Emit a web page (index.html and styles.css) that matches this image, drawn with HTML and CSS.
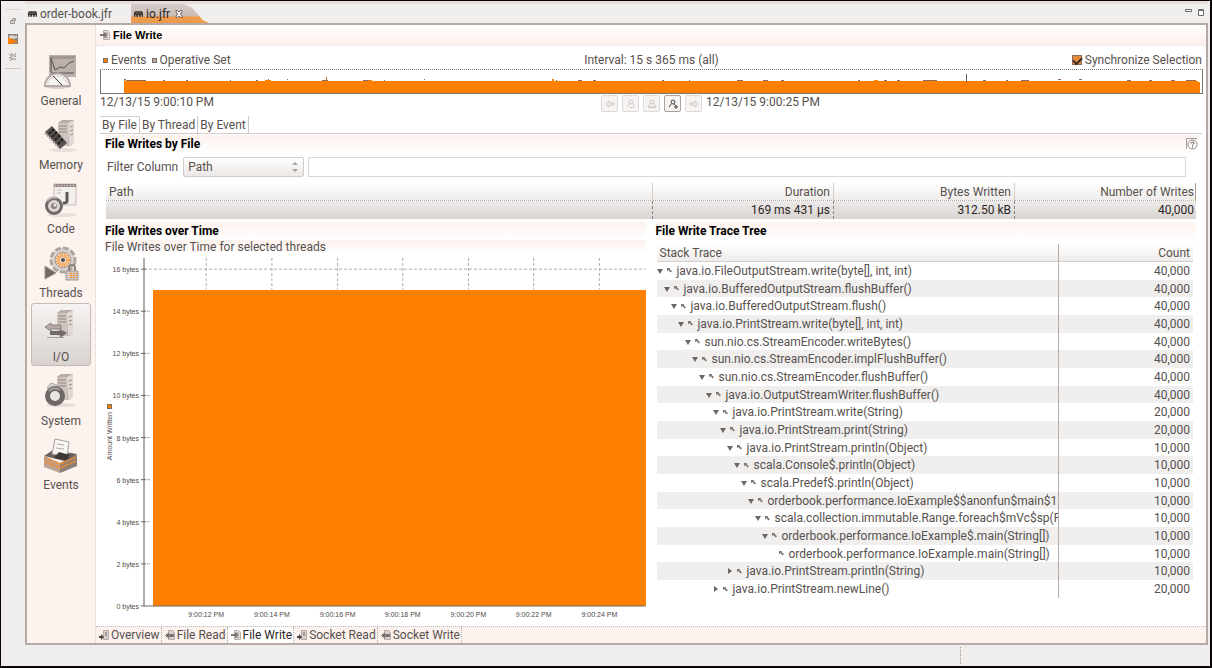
FILE: index.html
```html
<!DOCTYPE html>
<html lang="en">
<head>
<meta charset="utf-8">
<title>io.jfr - File Write</title>
<link rel="stylesheet" href="styles.css">
</head>
<body>
<svg class="defs" aria-hidden="true">
  <symbol id="jfr" viewBox="0 0 10 8"><path d="M0 7V3l1-2h8l1 2v4H8.500V5h-1v2H5.500V5h-1v2H2.500V5h-1v2z" fill="#3a3634"/><path d="M2 3h1M4.500 3h1M7 3h1" stroke="#b8b0ac"/></symbol>
  <symbol id="open" viewBox="0 0 6 6"><path d="M0 1h6L3 6z" fill="#6b6663"/></symbol>
  <symbol id="shut" viewBox="0 0 6 6"><path d="M1 0v6l4-3z" fill="#6b6663"/></symbol>
  <symbol id="frame" viewBox="0 0 6 6"><path d="M0 0h4L3 1.200 6 4 4.500 5.500 1.500 2.500 0 4z" fill="#7c7571"/></symbol>
  <symbol id="page-in" viewBox="0 0 10 10"><path d="M3.500.5h4l2 2v7h-6z" fill="#e4dedb" stroke="#b5aca7"/><path d="M5 3h3M5 7.500h3" stroke="#a09792"/><path d="M0 4h4V2l4 3-4 3V6H0z" fill="#7c7571"/></symbol>
  <symbol id="page-out" viewBox="0 0 10 10"><path d="M3.500.5h4l2 2v7h-6z" fill="#d8d0cc" stroke="#b5aca7"/><path d="M9 4H4V2L0 5.500 4 9V7h5z" fill="#7c7571"/></symbol>
  <symbol id="socket" viewBox="0 0 10 10"><path d="M4.500.5h5v9h-5z" fill="#d8d0cc" stroke="#b5aca7"/><path d="M6 3h2M6 5h2" stroke="#6b6562"/><path d="M0 6h2V4l3 3-3 3V8H0z" fill="#4a4643"/></symbol>
  <symbol id="tower" viewBox="0 0 18 27"><path d="M1 3l4-3h12v23l-4 3H1z" fill="#b9aca7"/><path d="M1 3h10v23H1z" fill="#cfc4c0"/><path d="M11 3l6-3v23l-5 3z" fill="#e2dad7"/><path d="M2 6h8M2 9h8M2 12h8M13 7l3-1M13 11l3-1M13 15l3-1" stroke="#968a85" fill="none"/></symbol>
</svg>

<div class="window">
  <aside class="trim" aria-label="Fast views">
    <button aria-label="Restore"><svg viewBox="0 0 10 10"><path d="M4.500 2.500h3v2h-3zM2.500 4.500h4v3h-4z" fill="#d5cfcc" stroke="#a0988f"/></svg></button>
    <button aria-label="JVM Browser"><svg viewBox="0 0 10 10"><path d="M0 0h10v10H0z" fill="#8a817d"/><path d="M1 2l3-1 3 1 2-1v3L5 5 1 4z" fill="#d9d2cf"/><path d="M0 4h3l1 2 2-1 1 2h2v2H7l-1-1-2 2H0z" fill="#ff7f00"/></svg></button>
    <button aria-label="Event Types"><svg viewBox="0 0 10 10"><path d="M1 2l7 6M4 1l1 7M1 6l7-2M8 1L2 9" stroke="#8a827e" fill="none"/><circle cx="5" cy="5" r="1.500" fill="#e5e0dd"/></svg></button>
  </aside>

  <div class="workbench">
    <header class="editor-tabs">
      <button class="etab"><svg class="jfr"><use href="#jfr"/></svg>order-book.jfr</button>
      <button class="etab current"><svg class="jfr"><use href="#jfr"/></svg>io.jfr<svg class="close" viewBox="0 0 8 8"><path d="M1 .5h1.500L4 2 5.500.5H7v1.500L5.500 4 7 6v1.500H5.500L4 6 2.500 7.500H1V6l1.500-2L1 2z" fill="#eee" stroke="#6e6662"/></svg></button>
      <span class="grow"></span>
      <button class="win" aria-label="Minimize"><svg viewBox="0 0 8 8"><path d="M.5 1.500h6v2h-6z" fill="#fff" stroke="#6e6a68"/></svg></button>
      <button class="win" aria-label="Maximize"><svg viewBox="0 0 8 8"><path d="M1.500 1.500h5v6h-5zM1 2.500h6" fill="#fff" stroke="#6e6a68"/></svg></button>
    </header>

    <div class="editor">
      <nav class="groups">
        <button><svg viewBox="0 0 36 36"><path d="M6 1h27v22H6z" fill="#bbb0ac"/><path d="M7 2h25v3H7z" fill="#a3988f"/><path d="M8 4l4 12 5-3 4 1 5-5 5-2M8 4v14M8 19h23" stroke="#57514e" fill="none"/><ellipse cx="15" cy="32" rx="13" ry="3" fill="#d5ccc8"/><path d="M2 32a12 12 0 0 1 25 0z" fill="#f6f3f1" stroke="#b5aaa5" stroke-width="2"/><path d="M5 29a10 10 0 0 1 19 0" stroke="#8a817d" stroke-dasharray="1 2" fill="none"/><path d="M10 22l9 9" stroke="#403b38"/></svg>General</button>
        <button><svg viewBox="0 0 36 36"><use href="#tower" x="14" y="2" width="18" height="27"/><ellipse cx="20" cy="32" rx="14" ry="2" fill="#e9e0dc"/><path d="M2 14l7-6 15 17-7 6z" fill="#57524f"/><path d="M6 16l5-5M9 19l5-5M12 22l5-5M15 26l5-5" stroke="#1f1b19" stroke-width="2" stroke-dasharray="3 1"/><path d="M2 15l15 16" stroke="#aaa19c" stroke-width="2" stroke-dasharray="2 1"/></svg>Memory</button>
        <button><svg viewBox="0 0 36 36"><path d="M11 2h22v21H11z" fill="#f3efed" stroke="#c5bcb8"/><path d="M11 2h22v3H11z" fill="#978b86"/><path d="M12 3.500h20" stroke="#e5deda" stroke-dasharray="1 2"/><path d="M14 8h5M14 11h4" stroke="#c5bcb8"/><path d="M24 10v9q0 2-4 2" stroke="#5f5956" stroke-width="3" fill="none"/><ellipse cx="19" cy="33" rx="15" ry="2" fill="#e9e0dc"/><circle cx="11" cy="24" r="7.500" fill="#ddd5d1" stroke="#6f6a67" stroke-width="3"/><circle cx="11" cy="24" r="3" fill="#8b827e"/><circle cx="12" cy="23" r="1.500" fill="#eee9e7"/><path d="M4 19q4-5 10-3" stroke="#b5b0ad" stroke-width="2" fill="none"/></svg>Code</button>
        <button><svg viewBox="0 0 36 36"><circle cx="20" cy="14" r="12" fill="#ddd5d1" stroke="#b0a6a1" stroke-width="3" stroke-dasharray="6 2"/><circle cx="20" cy="14" r="8" fill="#eadcd4" stroke="#a0958f"/><circle cx="20" cy="14" r="5" fill="none" stroke="#ff8a1a" stroke-width="4" stroke-dasharray="1 1"/><circle cx="20" cy="14" r="2" fill="#57514e"/><path d="M2 20v13l11-6z" fill="#716b68" stroke="#a0958f"/><path d="M26 25v-3a3 3 0 0 1 6 0v3" stroke="#8a817d" stroke-width="2" fill="none"/><path d="M23 25h12v9H23z" fill="#d5c8c0" stroke="#a0958f"/><path d="M27 27.500h7M27 29.500h7M27 31.500h7" stroke="#ff8a1a" stroke-dasharray="2 1"/></svg>Threads</button>
        <button class="on"><svg viewBox="0 0 36 36"><use href="#tower" x="13" y="0" width="18" height="27"/><path d="M2 17l6-4v2h10v4H8v2z" fill="#b5aaa5" stroke="#8a827e"/><path d="M24 23l-7-4v2H7v4h10v3z" fill="#716b68"/><path d="M4 27.500h17" stroke="#a89e99"/></svg>I/O</button>
        <button><svg viewBox="0 0 36 36"><use href="#tower" x="13" y="0" width="18" height="27"/><ellipse cx="18" cy="31" rx="15" ry="2" fill="#e5dcd8"/><path d="M4 14l4-5 6 2 3 6z" fill="#d9d2cf" stroke="#b5aaa5"/><circle cx="12" cy="22" r="7.500" fill="#eae5e2" stroke="#6e6966" stroke-width="5"/><path d="M6 17q5-5 11-1" stroke="#a5a09d" stroke-width="2" fill="none"/></svg>System</button>
        <button><svg viewBox="0 0 36 36"><path d="M1 18l9-6 24 4-8 8z" fill="#6b625e"/><path d="M9 16L12 1l14 3-2 14z" fill="#f7f5f3" stroke="#aaa09b"/><path d="M14 6l7 1M13 10l8 1" stroke="#b5aba6"/><path d="M11 20l5-6 11 3-3 6z" fill="#3d3835"/><path d="M1 18l16 7v10L1 29z" fill="#b9a395"/><path d="M17 25l17-8v11L17 35z" fill="#8b7f78"/><path d="M2 20l15 6 16-7M2 24l15 6 16-7" stroke="#f58a2a" stroke-width="2" stroke-dasharray="2 1" fill="none"/></svg>Events</button>
      </nav>

      <main>
        <h1><svg class="ico"><use href="#page-in"/></svg>File Write</h1>

        <section class="range">
          <div class="legend">
            <span class="keys"><i class="key events"></i>Events<i class="key oper"></i>Operative Set</span>
            <span>Interval: 15 s 365 ms (all)</span>
            <label class="sync"><input type="checkbox" checked>Synchronize Selection</label>
          </div>
          <svg class="strip" viewBox="0 0 1101 23" preserveAspectRatio="none" role="img" aria-label="Event density">
            <path d="M23 23V9h1v2h140v-1h6v1h55v-2h1v2h38v-1h7v1h180v-2h2v2h320v-1h4v1h320v1h2v12z" fill="#ff7f00"/>
            <path d="M23 9.500h2M25 10.500h20M62 10.500h2M85 10.500h2M129 10.500h1M155 10.500h2M167 9.500h1M186 9.500h1M221 10.500h6M262 10.500h6M283 10.500h1M323 9.500h1M455 10.500h1M477 10.500h4M492 10.500h3M561 10.500h2M588 10.500h1M636 10.500h6M662 10.500h5M680 10.500h3M757 10.500h2M783 10.500h3M796 10.500h3M822 10.500h14M882 10.500h3M905 10.500h2M920 10.500h8M957 9.500h3M978 9.500h3M1026 10.500h4M1048 10.500h3M1070 10.500h4M1085 10.500h10" stroke="#8f6c52" fill="none"/>
            <path d="M225.500 7v4" stroke="#b5713a"/><path d="M865.500 4v8" stroke="#605a57"/>
          </svg>
          <div class="times">
            <span>12/13/15 9:00:10 PM</span>
            <span class="zoomers">
              <button disabled aria-label="Back"><svg viewBox="0 0 12 12"><path d="M2 6l3-3v2h5v2H5v2z"/></svg></button>
              <button disabled aria-label="Zoom in"><svg viewBox="0 0 12 12"><circle cx="6" cy="4" r="2"/><path d="M4.500 5.500L2 9M7.500 5.500l2 3M5 9.500h4"/></svg></button>
              <button disabled aria-label="Zoom out"><svg viewBox="0 0 12 12"><circle cx="6" cy="4" r="2"/><path d="M4.500 5.500L2 9h8L7.500 5.500M3 9.500h7"/></svg></button>
              <button aria-label="Zoom to fit"><svg viewBox="0 0 12 12"><circle cx="6" cy="4" r="2"/><path d="M4.500 5.500L2 9M7 6l2 2M7 9h4M9 7v4"/></svg></button>
              <button disabled aria-label="Forward"><svg viewBox="0 0 12 12"><path d="M10 6L7 3v2H2v2h5v2z"/></svg></button>
            </span>
            <span>12/13/15 9:00:25 PM</span>
          </div>
        </section>

        <div class="subtabs"><button class="on">By File</button><button>By Thread</button><button>By Event</button></div>

        <section class="by-file">
          <h2>File Writes by File<button class="help" aria-label="Help"><svg viewBox="0 0 12 12"><path d="M.5 11V.5H11" stroke="#a39a95" fill="none"/><circle cx="6.500" cy="6.500" r="4.500" fill="#fff" stroke="#8e8682"/><path d="M5 5.500q0-1.500 1.500-1.500T8 5.300q0 .7-1.500 1.700v.5M6.500 8.500v1" stroke="#4b4643" fill="none"/></svg></button></h2>
          <div class="filter">
            <label for="col">Filter Column</label>
            <span class="combo"><select id="col"><option>Path</option></select><svg viewBox="0 0 6 10"><path d="M3 0l3 3H0zM0 7h6L3 10z" fill="#aaa19d"/></svg></span>
            <input type="text" aria-label="Filter text">
          </div>
          <table class="files">
            <thead><tr><th>Path</th><th>Duration</th><th>Bytes Written</th><th>Number of Writes</th></tr></thead>
            <tbody><tr><td></td><td>169 ms 431 µs</td><td>312.50 kB</td><td>40,000</td></tr></tbody>
          </table>
        </section>

        <div class="split">
          <section class="over-time">
            <h2>File Writes over Time</h2>
            <p>File Writes over Time for selected threads</p>
            <div class="chart">
              <div class="ytitle"><span>Amount Written</span><i class="key events"></i></div>
              <svg class="plot" role="img" aria-label="Amount written over time">
                <g class="grid">
                  <line x1="0" x2="100%" y1="3.200%" y2="3.200%"/>
                  <line x1="12.400%" x2="12.400%" y1="0" y2="9%"/><line x1="25.500%" x2="25.500%" y1="0" y2="9%"/><line x1="38.600%" x2="38.600%" y1="0" y2="9%"/><line x1="51.600%" x2="51.600%" y1="0" y2="9%"/><line x1="64.700%" x2="64.700%" y1="0" y2="9%"/><line x1="77.700%" x2="77.700%" y1="0" y2="9%"/><line x1="90.800%" x2="90.800%" y1="0" y2="9%"/>
                </g>
                <rect class="area" x="9" y="9.200%" width="100%" height="90.800%"/>
                <line class="axis" x1="0" x2="0" y1="0" y2="100%"/>
                <g class="ticks">
                  <line x1="-3" x2="2" y1="3.200%" y2="3.200%"/><line x1="-3" x2="2" y1="15.300%" y2="15.300%"/><line x1="-3" x2="2" y1="27.400%" y2="27.400%"/><line x1="-3" x2="2" y1="39.500%" y2="39.500%"/><line x1="-3" x2="2" y1="51.600%" y2="51.600%"/><line x1="-3" x2="2" y1="63.700%" y2="63.700%"/><line x1="-3" x2="2" y1="75.800%" y2="75.800%"/><line x1="-3" x2="2" y1="87.900%" y2="87.900%"/><line x1="-3" x2="100%" y1="100%" y2="100%"/>
                </g>
                <g class="grid">
                  <line x1="3" x2="8" y1="15.300%" y2="15.300%"/><line x1="3" x2="8" y1="27.400%" y2="27.400%"/><line x1="3" x2="8" y1="39.500%" y2="39.500%"/><line x1="3" x2="8" y1="51.600%" y2="51.600%"/><line x1="3" x2="8" y1="63.700%" y2="63.700%"/><line x1="3" x2="8" y1="75.800%" y2="75.800%"/><line x1="3" x2="8" y1="87.900%" y2="87.900%"/>
                </g>
                <g class="ylab">
                  <text x="-5" y="3.200%" dy="3">16 bytes</text><text x="-5" y="15.300%" dy="3">14 bytes</text><text x="-5" y="27.400%" dy="3">12 bytes</text><text x="-5" y="39.500%" dy="3">10 bytes</text><text x="-5" y="51.600%" dy="3">8 bytes</text><text x="-5" y="63.700%" dy="3">6 bytes</text><text x="-5" y="75.800%" dy="3">4 bytes</text><text x="-5" y="87.900%" dy="3">2 bytes</text><text x="-5" y="100%" dy="3">0 bytes</text>
                </g>
                <g class="xlab">
                  <text x="12.400%" y="100%" dy="11">9:00:12 PM</text><text x="25.500%" y="100%" dy="11">9:00:14 PM</text><text x="38.600%" y="100%" dy="11">9:00:16 PM</text><text x="51.600%" y="100%" dy="11">9:00:18 PM</text><text x="64.700%" y="100%" dy="11">9:00:20 PM</text><text x="77.700%" y="100%" dy="11">9:00:22 PM</text><text x="90.800%" y="100%" dy="11">9:00:24 PM</text>
                </g>
              </svg>
            </div>
          </section>

          <section class="traces">
            <h2>File Write Trace Tree</h2>
            <div class="tree-box"><table class="tree">
              <thead><tr><th>Stack Trace</th><th>Count</th></tr></thead>
              <tbody id="rows"></tbody>
            </table></div>
          </section>
        </div>

        <footer class="pages">
          <button><svg class="ico"><use href="#socket"/></svg>Overview</button>
          <button><svg class="ico"><use href="#page-out"/></svg>File Read</button>
          <button class="on"><svg class="ico"><use href="#page-in"/></svg>File Write</button>
          <button><svg class="ico"><use href="#socket"/></svg>Socket Read</button>
          <button><svg class="ico"><use href="#page-out"/></svg>Socket Write</button>
        </footer>
      </main>
    </div>
    <div class="status"><span></span></div>
  </div>
</div>
<script src="tree.js"></script>
</body>
</html>
```

FILE: tree.js
```js
// [depth, state, frame, count]
const frames = [
  [0, "open", "java.io.FileOutputStream.write(byte[], int, int)", "40,000"],
  [1, "open", "java.io.BufferedOutputStream.flushBuffer()", "40,000"],
  [2, "open", "java.io.BufferedOutputStream.flush()", "40,000"],
  [3, "open", "java.io.PrintStream.write(byte[], int, int)", "40,000"],
  [4, "open", "sun.nio.cs.StreamEncoder.writeBytes()", "40,000"],
  [5, "open", "sun.nio.cs.StreamEncoder.implFlushBuffer()", "40,000"],
  [6, "open", "sun.nio.cs.StreamEncoder.flushBuffer()", "40,000"],
  [7, "open", "java.io.OutputStreamWriter.flushBuffer()", "40,000"],
  [8, "open", "java.io.PrintStream.write(String)", "20,000"],
  [9, "open", "java.io.PrintStream.print(String)", "20,000"],
  [10, "open", "java.io.PrintStream.println(Object)", "10,000"],
  [11, "open", "scala.Console$.println(Object)", "10,000"],
  [12, "open", "scala.Predef$.println(Object)", "10,000"],
  [13, "open", "orderbook.performance.IoExample$$anonfun$main$1", "10,000"],
  [14, "open", "scala.collection.immutable.Range.foreach$mVc$sp(F", "10,000"],
  [15, "open", "orderbook.performance.IoExample$.main(String[])", "10,000"],
  [16, "leaf", "orderbook.performance.IoExample.main(String[])", "10,000"],
  [10, "shut", "java.io.PrintStream.println(String)", "10,000"],
  [8, "shut", "java.io.PrintStream.newLine()", "20,000"]
];
document.getElementById("rows").innerHTML = frames.map(([depth, state, name, count]) => {
  const twist = state === "leaf"
    ? '<span class="twist"></span>'
    : `<button class="twist" aria-label="Toggle"><svg><use href="#${state}"/></svg></button>`;
  return `<tr><td><div class="node" style="padding-left:${depth * 7}px">${twist}<svg class="frame"><use href="#frame"/></svg><span>${name}</span></div></td><td>${count}</td></tr>`;
}).join("");
```

FILE: styles.css
```css
* { box-sizing: border-box; }
html, body { height: 100%; margin: 0; }
body, button, input, select {
  font-family: Roboto, "Noto Sans", sans-serif;
  font-size: 12px;
  line-height: 16px;
  color: #57514e;
}
button { border: 0; padding: 0; background: none; }
h1, h2, p { margin: 0; }
svg { display: block; flex: none; }
.defs { position: absolute; width: 0; height: 0; }
.grow { flex: 1; }

.window { display: flex; height: 100%; min-height: 660px; border: 2px solid #0c0507; border-top-width: 1px; border-left-width: 1px; background: #efeeec; }
.trim { width: 24px; padding: 15px 4px 0; display: flex; flex-direction: column; align-items: center; gap: 8px; background: linear-gradient(#dcd4d0, #dcd4d0) 4px 8px / 16px 1px no-repeat, linear-gradient(#d0c8c4, #d0c8c4) 4px 67px / 16px 1px no-repeat; }
.trim button, .trim svg { width: 10px; height: 10px; }

.workbench { flex: 1; min-width: 0; display: flex; flex-direction: column; padding-right: 2px; }
.editor-tabs { display: flex; align-items: flex-end; height: 22px; padding-right: 3px; border-top: 3px solid #e6dcd9; background: #f0efee; }
.etab { display: flex; align-items: center; gap: 3px; height: 19px; padding: 0 19px 0 3px; }
.etab .jfr { width: 9px; height: 8px; }
.etab.current { padding: 0 26px 0 3px; color: #2c2422; background: linear-gradient(#d5ccc8, #cbbdb5 60%, #ee9a4c 70%); clip-path: polygon(0 0, 68% 0, 78% 20%, 92% 85%, 100% 100%, 0 100%); }
.close { width: 8px; height: 8px; margin-left: 2px; }
.win { align-self: flex-start; margin: 4px 0 0 4px; }
.win svg { width: 8px; height: 8px; }

.editor { flex: 1; min-height: 0; display: flex; border: 2px solid #b5aaa5; background: #fff; }
.groups { flex: none; width: 69px; padding: 22px 4px 0; display: flex; flex-direction: column; gap: 1px; background: #fcf2ee; border-right: 1px dotted #ddd3ce; }
.groups button { display: flex; flex-direction: column; align-items: center; gap: 3px; height: 63px; padding-top: 6px; border: 1px solid transparent; border-radius: 3px; }
.groups button svg { width: 36px; height: 36px; }
.groups .on { background: linear-gradient(#f6f4f3, #d9d3d0); border-color: #c5bcb8; }

main { flex: 1; min-width: 0; display: flex; flex-direction: column; }
.ico { width: 10px; height: 10px; }
h1 { display: flex; align-items: center; gap: 3px; height: 21px; padding-left: 4px; font-family: "Liberation Sans", sans-serif; font-size: 11px; color: #000; background: linear-gradient(#fff, #fdf0ea); border-bottom: 1px dotted #e0d5d0; }
.range { padding: 6px 3px 0 4px; }
.legend { display: grid; grid-template-columns: 1fr auto 1fr; height: 17px; }
.keys, .sync { display: flex; align-items: center; gap: 3px; height: 16px; }
.keys { padding-left: 3px; }
.key { width: 5px; height: 5px; border: 1px solid #7a6a60; background: #b5aaa5; }
.key.events { background: #ff7f00; }
.key.oper { margin-left: 2px; }
.sync { justify-self: end; padding-right: 1px; }
.sync input { appearance: none; width: 10px; height: 10px; margin: 0; border: 1px solid #8a6f5c; background: #e58a3c; display: grid; place-items: center; }
.sync input:checked::before { content: ""; width: 7px; height: 4px; border: solid #3a2c24; border-width: 0 0 2px 2px; transform: rotate(-45deg); }
.strip { width: 100%; height: 25px; border: 1px solid #7c7571; border-top-style: dotted; background: #fff; }
.times { display: grid; grid-template-columns: 1fr auto 1fr; gap: 4px; height: 18px; }
.zoomers { display: flex; gap: 4px; padding-top: 1px; }
.zoomers button { display: grid; place-items: center; width: 17px; height: 17px; border: 1px solid #aaa19d; border-radius: 2px; background: #f6f4f3; }
.zoomers button:disabled { border-color: #dfdad8; }
.zoomers svg { width: 12px; height: 12px; fill: none; stroke: #4a4643; }
.zoomers :disabled svg { stroke: #cdc6c3; }

.subtabs { display: flex; height: 18px; margin: 4px 4px 0; border-bottom: 1px solid #d2cbc8; }
.subtabs button { padding: 0 2px; border-right: 1px solid #cfc7c3; }
.subtabs .on { border-top: 1px solid #d8d2cf; background: #fff; }

h2 { display: flex; justify-content: space-between; align-items: center; height: 18px; font-size: 12px; line-height: 16px; color: #000; background: linear-gradient(#fdf2ed, #fff); }
.by-file { padding: 1px 8px 0 9px; }
.by-file .help, .help svg { width: 12px; height: 12px; }
.filter { display: flex; align-items: center; gap: 4px; height: 20px; margin: 4px 12px 0 2px; }
.combo { display: grid; width: 121px; height: 20px; margin-left: 1px; }
.combo > * { grid-area: 1 / 1; }
.combo select { appearance: none; width: 100%; height: 20px; padding: 0 4px; border: 1px solid #d2cbc8; border-radius: 2px; background: linear-gradient(#fff, #ebe8e6); line-height: 16px; }
.combo svg { width: 6px; height: 10px; place-self: center end; margin-right: 6px; pointer-events: none; }
.filter input { flex: 1; min-width: 0; height: 20px; border: 1px solid #dcd7d5; background: #fff; }

table { border-collapse: separate; border-spacing: 0; table-layout: fixed; width: 100%; }
th { font-weight: 400; text-align: left; background: linear-gradient(#fff, #eeecea); white-space: nowrap; }
td, th { padding: 0 3px; height: 17px; line-height: 16px; }
th:not(:first-child), td:not(:first-child) { text-align: right; }
.files { margin: 6px 0 0 1px; width: calc(100% - 3px); }
.files th, .files td { height: 18px; border-right: 1px solid #d5cecb; }
.files th { border-bottom: 1px dotted #b5aaa5; }
.files th:last-child { border-right: 1px solid #b09c8e; }
.files td { border-right: 1px dashed #8a827e; background: linear-gradient(#ecebea, #d9d4d1); color: #2c2725; }
.files td:last-child { border-right-color: transparent; }
.files th:last-child, .files td:last-child { padding-right: 1px; }
.files th:nth-child(n+2) { width: 181px; }

.split { flex: 1; min-height: 0; display: grid; grid-template-columns: minmax(0, 1fr) minmax(0, 1fr); gap: 10px; padding: 3px 10px 0 9px; }
.over-time, .traces { display: flex; flex-direction: column; min-height: 0; }
.over-time { overflow: hidden; }
.over-time p { background: linear-gradient(#fdf2ed, #fff); line-height: 14px; }
.chart { flex: 1; min-height: 0; display: flex; padding: 4px 0 20px; }
.ytitle { width: 39px; display: flex; flex-direction: column-reverse; align-items: flex-start; justify-content: center; gap: 3px; padding-left: 1px; }
.ytitle span { writing-mode: vertical-rl; transform: rotate(180deg); line-height: 8px; font-family: "Liberation Sans", sans-serif; font-size: 7px; }
.ytitle .key { margin-left: 1px; }
.plot { flex: 1; min-width: 0; height: 100%; overflow: visible; }
.plot text { font-family: "Liberation Sans", sans-serif; font-size: 7px; fill: #4f4a47; }
.ylab { text-anchor: end; }
.xlab { text-anchor: middle; }
.grid line { stroke: #b5aca7; stroke-dasharray: 3 2; }
.area { fill: #ff7f00; }
.axis { stroke: #b5aaa5; stroke-width: 2; }
.ticks line { stroke: #6e6662; }

.tree-box { flex: 1; min-height: 0; margin: 4px 3px 28px 1px; }
.tree { height: 100%; }
.tree th { height: 18px; border-bottom: 1px solid #d5cecb; }
.tree th:last-child { width: 134px; }
.tree th:first-child, .tree td:first-child { border-right: 1px solid #b5aaa5; }
.tree td:first-child { padding: 0; }
.tree tbody tr:nth-child(even) { background: #f0efee; }
.node { display: flex; align-items: center; overflow: hidden; white-space: nowrap; line-height: 16px; }
.twist { flex: none; width: 6px; height: 6px; margin-right: 4px; }
.twist svg { width: 6px; height: 6px; }
.frame { width: 5px; height: 5px; margin-right: 5px; }

.pages { display: flex; height: 17px; background: #fcf2ee; border-top: 1px dotted #c3bbb7; }
.pages button { display: flex; align-items: center; gap: 2px; padding: 0 1px 0 3px; border-right: 1px dotted #b5aaa5; line-height: 15px; }
.pages .on { background: #fff; color: #2c2725; }
.status { height: 21px; padding-left: 79%; display: flex; align-items: center; }
.status span { height: 17px; border-left: 1px dotted #a39a95; }
```
